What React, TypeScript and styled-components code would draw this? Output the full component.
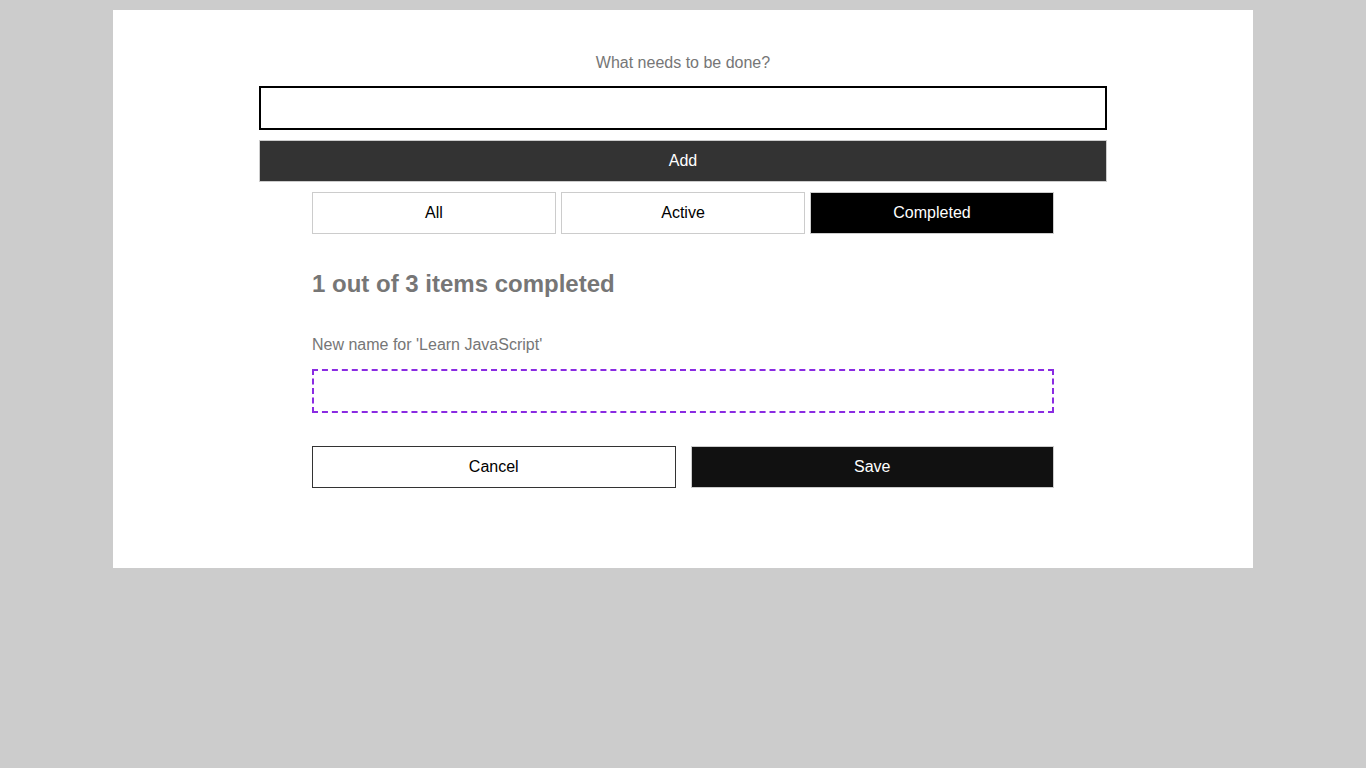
import React from "react";
import styled, { createGlobalStyle } from "styled-components";

const GlobalStyle = createGlobalStyle`
  html, body {
    margin: 0;
    padding: 0;
    background: #cccccc;
    font-family: "Liberation Sans", Arial, sans-serif;
  }
  * { box-sizing: border-box; }
`;

const Page = styled.div`
  padding-top: 10px;
  display: flex;
  justify-content: center;
`;

const Card = styled.main`
  width: 1140px;
  background: #ffffff;
  padding: 42px 146px 80px;
  display: flex;
  flex-direction: column;
`;

const Label = styled.label<{ $center?: boolean }>`
  display: block;
  font-size: 16px;
  line-height: 22px;
  color: #767676;
  text-align: ${(p) => (p.$center ? "center" : "left")};
`;

const TodoInput = styled.input`
  display: block;
  width: 100%;
  height: 44px;
  margin-top: 12px;
  border: 2px solid #000000;
  background: #fff;
  font-family: inherit;
  font-size: 16px;
  padding: 0 8px;
  outline: none;
`;

const AddButton = styled.button`
  display: block;
  width: 100%;
  height: 42px;
  margin-top: 10px;
  background: #333333;
  color: #ffffff;
  border: 1px solid #cccccc;
  font-family: inherit;
  font-size: 16px;
`;

const Inner = styled.div`
  padding: 0 53px;
  display: flex;
  flex-direction: column;
`;

const FilterRow = styled.div`
  display: grid;
  grid-template-columns: repeat(3, 1fr);
  gap: 5px;
  margin-top: 10px;
`;

const FilterButton = styled.button<{ $active?: boolean }>`
  height: 42px;
  background: ${(p) => (p.$active ? "#000000" : "#ffffff")};
  color: ${(p) => (p.$active ? "#ffffff" : "#000000")};
  border: 1px solid #cccccc;
  font-family: inherit;
  font-size: 16px;
`;

const Heading = styled.h2`
  margin: 35px 0 0;
  font-size: 24px;
  line-height: 30px;
  font-weight: bold;
  color: #767676;
`;

const EditForm = styled.form`
  margin-top: 35px;
  display: flex;
  flex-direction: column;
`;

const EditInput = styled.input`
  display: block;
  width: 100%;
  height: 44px;
  margin-top: 13px;
  border: 2px dashed #8a2be2;
  background: #fff;
  font-family: inherit;
  font-size: 16px;
  padding: 0 8px;
  outline: none;
`;

const ButtonRow = styled.div`
  display: grid;
  grid-template-columns: 1fr 1fr;
  gap: 15px;
  margin-top: 33px;
`;

const ActionButton = styled.button<{ $primary?: boolean }>`
  height: 42px;
  background: ${(p) => (p.$primary ? "#111111" : "#ffffff")};
  color: ${(p) => (p.$primary ? "#ffffff" : "#000000")};
  border: 1px solid ${(p) => (p.$primary ? "#cccccc" : "#333333")};
  font-family: inherit;
  font-size: 16px;
`;

export default function App() {
  return (
    <>
      <GlobalStyle />
      <Page>
        <Card>
          <Label $center htmlFor="new-todo">What needs to be done?</Label>
          <TodoInput id="new-todo" type="text" />
          <AddButton type="button">Add</AddButton>
          <Inner>
            <FilterRow>
              <FilterButton type="button">All</FilterButton>
              <FilterButton type="button">Active</FilterButton>
              <FilterButton type="button" $active>Completed</FilterButton>
            </FilterRow>
            <Heading>1 out of 3 items completed</Heading>
            <EditForm onSubmit={(e) => e.preventDefault()}>
              <Label htmlFor="edit-todo">New name for 'Learn JavaScript'</Label>
              <EditInput id="edit-todo" type="text" />
              <ButtonRow>
                <ActionButton type="button">Cancel</ActionButton>
                <ActionButton type="submit" $primary>Save</ActionButton>
              </ButtonRow>
            </EditForm>
          </Inner>
        </Card>
      </Page>
    </>
  );
}
